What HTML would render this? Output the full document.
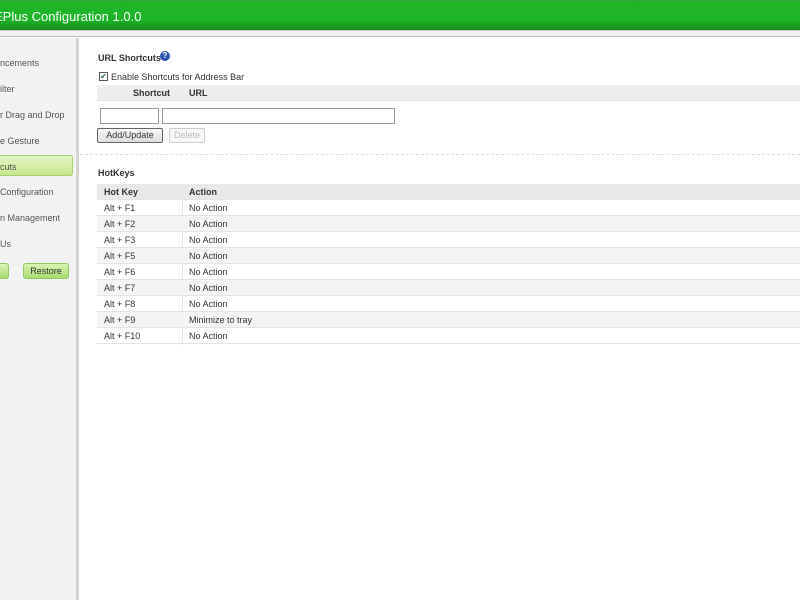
<!DOCTYPE html>
<html><head><style>
*{margin:0;padding:0;box-sizing:border-box}
body{width:800px;height:600px;overflow:hidden;background:#fff;font-family:"Liberation Sans",Arial,sans-serif;font-size:9px;color:#333;position:relative}
.hdr{position:absolute;left:0;top:0;width:800px;height:31px;background:linear-gradient(#3a9a3a 0,#1fb628 2px,#1db428 20px,#168a1c 30px);border-bottom:1px solid #ccc}
.hdr span{position:absolute;left:-6px;top:9px;color:#fff;font-size:13px}
.band{position:absolute;left:0;top:31px;width:800px;height:6px;background:#f1f1f1;border-bottom:1px solid #bbb}
.side{position:absolute;left:0;top:38px;width:76px;height:562px;background:#f2f2f2}
.div{position:absolute;left:76px;top:38px;width:3px;height:562px;background:#d4d4d4}
.si{position:absolute;left:0;font-size:9px;color:#555}
.sel{position:absolute;left:-4px;top:155px;width:77px;height:21px;background:linear-gradient(#e4f5c4,#c6e68e);border:1px solid #a8d070;border-radius:3px}
.gb{position:absolute;top:263px;height:16px;background:linear-gradient(#d8f4b4,#a8dc70);border:1px solid #8fc860;border-radius:3px;font-size:9px;text-align:center;line-height:14px;color:#333}
.a{position:absolute;white-space:nowrap}
.inp{position:absolute;height:16px;border:1px solid #999;background:#fff}
.row{position:absolute;left:97px;width:703px;height:16px;border-bottom:1px solid #e4e4e4;line-height:16px}
.row span{position:absolute}
</style></head><body>
<div class="hdr"><span>EPlus Configuration 1.0.0</span></div>
<div class="band"></div>
<div class="side"></div><div class="div"></div>
<div class="sel"></div>
<div class="si" style="top:58px">ncements</div>
<div class="si" style="top:84px">ilter</div>
<div class="si" style="top:110px">r Drag and Drop</div>
<div class="si" style="top:136px">e Gesture</div>
<div class="si" style="top:162px">cuts</div>
<div class="si" style="top:187px">Configuration</div>
<div class="si" style="top:213px">n Management</div>
<div class="si" style="top:239px">Us</div>
<div class="gb" style="left:-5px;width:14px"></div>
<div class="gb" style="left:23px;width:46px">Restore</div>

<div class="a" style="left:98px;top:53px;font-weight:bold">URL Shortcuts</div>
<div class="a" style="left:160px;top:51px;width:10px;height:10px;border-radius:50%;background:#2a55b0;color:#fff;font-size:8px;text-align:center;line-height:10px;font-weight:bold">?</div>
<div class="a" style="left:99px;top:72px;width:9px;height:9px;border:1px solid #555;background:#fff;font-size:8px;line-height:7px;text-align:center;color:#274">✔</div>
<div class="a" style="left:111px;top:72px">Enable Shortcuts for Address Bar</div>
<div class="a" style="left:97px;top:85px;width:703px;height:16px;background:#eee;border-bottom:1px solid #e0e0e0"></div>
<div class="a" style="left:133px;top:88px;font-weight:bold">Shortcut</div>
<div class="a" style="left:189px;top:88px;font-weight:bold">URL</div>
<div class="inp" style="left:100px;top:108px;width:59px"></div>
<div class="inp" style="left:162px;top:108px;width:233px"></div>
<div class="a" style="left:97px;top:128px;width:66px;height:15px;border:1px solid #666;border-radius:2px;background:linear-gradient(#fafafa,#ddd);text-align:center;line-height:13px">Add/Update</div>
<div class="a" style="left:169px;top:128px;width:36px;height:15px;border:1px solid #ccc;border-radius:2px;background:#f8f8f8;color:#bbb;text-align:center;line-height:13px">Delete</div>
<div class="a" style="left:80px;top:154px;width:720px;border-top:1px dashed #ddd"></div>
<div class="a" style="left:98px;top:168px;font-weight:bold">HotKeys</div>
<div class="a" style="left:182px;top:184px;width:1px;height:161px;background:#e4e4e4"></div>
<div class="row" style="top:184px;background:#e9e9e9;font-weight:bold"><span style="left:7px">Hot Key</span><span style="left:92px">Action</span></div>
<div class="row" style="top:200px"><span style="left:7px">Alt + F1</span><span style="left:92px">No Action</span></div>
<div class="row" style="top:216px;background:#f4f4f4"><span style="left:7px">Alt + F2</span><span style="left:92px">No Action</span></div>
<div class="row" style="top:232px"><span style="left:7px">Alt + F3</span><span style="left:92px">No Action</span></div>
<div class="row" style="top:248px;background:#f4f4f4"><span style="left:7px">Alt + F5</span><span style="left:92px">No Action</span></div>
<div class="row" style="top:264px"><span style="left:7px">Alt + F6</span><span style="left:92px">No Action</span></div>
<div class="row" style="top:280px;background:#f4f4f4"><span style="left:7px">Alt + F7</span><span style="left:92px">No Action</span></div>
<div class="row" style="top:296px"><span style="left:7px">Alt + F8</span><span style="left:92px">No Action</span></div>
<div class="row" style="top:312px;background:#f4f4f4"><span style="left:7px">Alt + F9</span><span style="left:92px">Minimize to tray</span></div>
<div class="row" style="top:328px"><span style="left:7px">Alt + F10</span><span style="left:92px">No Action</span></div>
</body></html>
